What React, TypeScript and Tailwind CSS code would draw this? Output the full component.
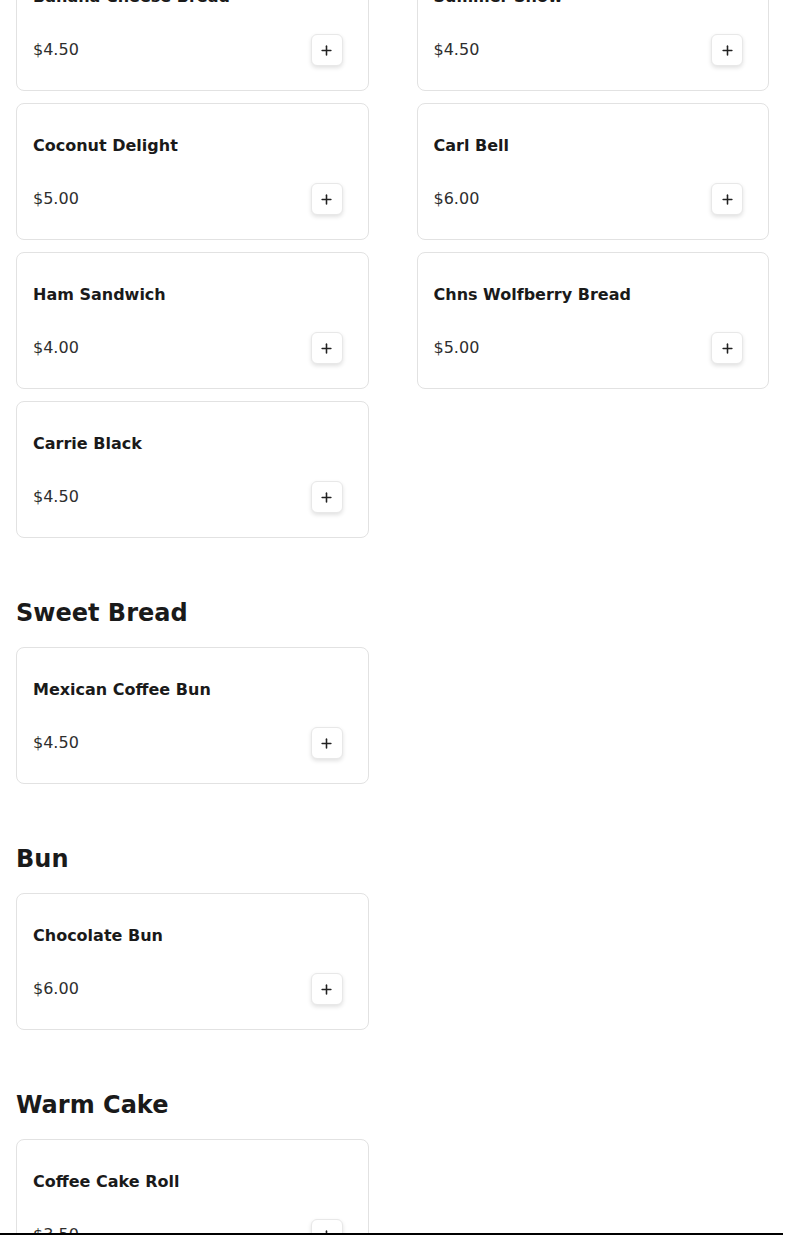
import { Plus } from "lucide-react"

type Item = { name: string; price: string }

const sections: { title?: string; items: Item[] }[] = [
  {
    items: [
      { name: "Banana Cheese Bread", price: "$4.50" },
      { name: "Summer Snow", price: "$4.50" },
      { name: "Coconut Delight", price: "$5.00" },
      { name: "Carl Bell", price: "$6.00" },
      { name: "Ham Sandwich", price: "$4.00" },
      { name: "Chns Wolfberry Bread", price: "$5.00" },
      { name: "Carrie Black", price: "$4.50" },
    ],
  },
  { title: "Sweet Bread", items: [{ name: "Mexican Coffee Bun", price: "$4.50" }] },
  { title: "Bun", items: [{ name: "Chocolate Bun", price: "$6.00" }] },
  { title: "Warm Cake", items: [{ name: "Coffee Cake Roll", price: "$3.50" }] },
]

function MenuCard({ item }: { item: Item }) {
  return (
    <div className="rounded-lg border border-[#e2e2e2] bg-white pl-4 pr-[25px] pt-[30px] pb-6">
      <h3 className="text-base leading-6 font-bold text-[#1a1a1a]">{item.name}</h3>
      <div className="mt-[25px] flex h-8 items-center justify-between">
        <span className="text-base text-[#2e2e2e]">{item.price}</span>
        <button
          className="flex h-8 w-8 items-center justify-center rounded-md border border-[#e8e8e8] bg-white text-[#222] shadow-[0_2px_4px_rgba(0,0,0,0.12)]"
          aria-label={`Add ${item.name}`}
        >
          <Plus size={15} strokeWidth={2.5} />
        </button>
      </div>
    </div>
  )
}

export default function App() {
  return (
    <div className="min-h-screen bg-white font-['DejaVu_Sans',sans-serif] text-[#1a1a1a]">
      {/* page is shown scrolled: first row of cards sits partly above the fold */}
      <div className="-mt-[46px] px-4 pb-10">
        {sections.map((section, i) => (
          <section key={i} className={i > 0 ? "mt-[59px]" : ""}>
            {section.title && (
              <h2 className="mb-[18px] text-2xl leading-8 font-bold text-[#1a1a1a]">{section.title}</h2>
            )}
            <div className="grid grid-cols-2 gap-x-12 gap-y-3">
              {section.items.map((item) => (
                <MenuCard key={item.name} item={item} />
              ))}
            </div>
          </section>
        ))}
      </div>

      {/* bottom bar edge peeking in */}
      <div className="fixed bottom-0 left-0 right-[2px] h-[2px] bg-black" />
    </div>
  )
}
